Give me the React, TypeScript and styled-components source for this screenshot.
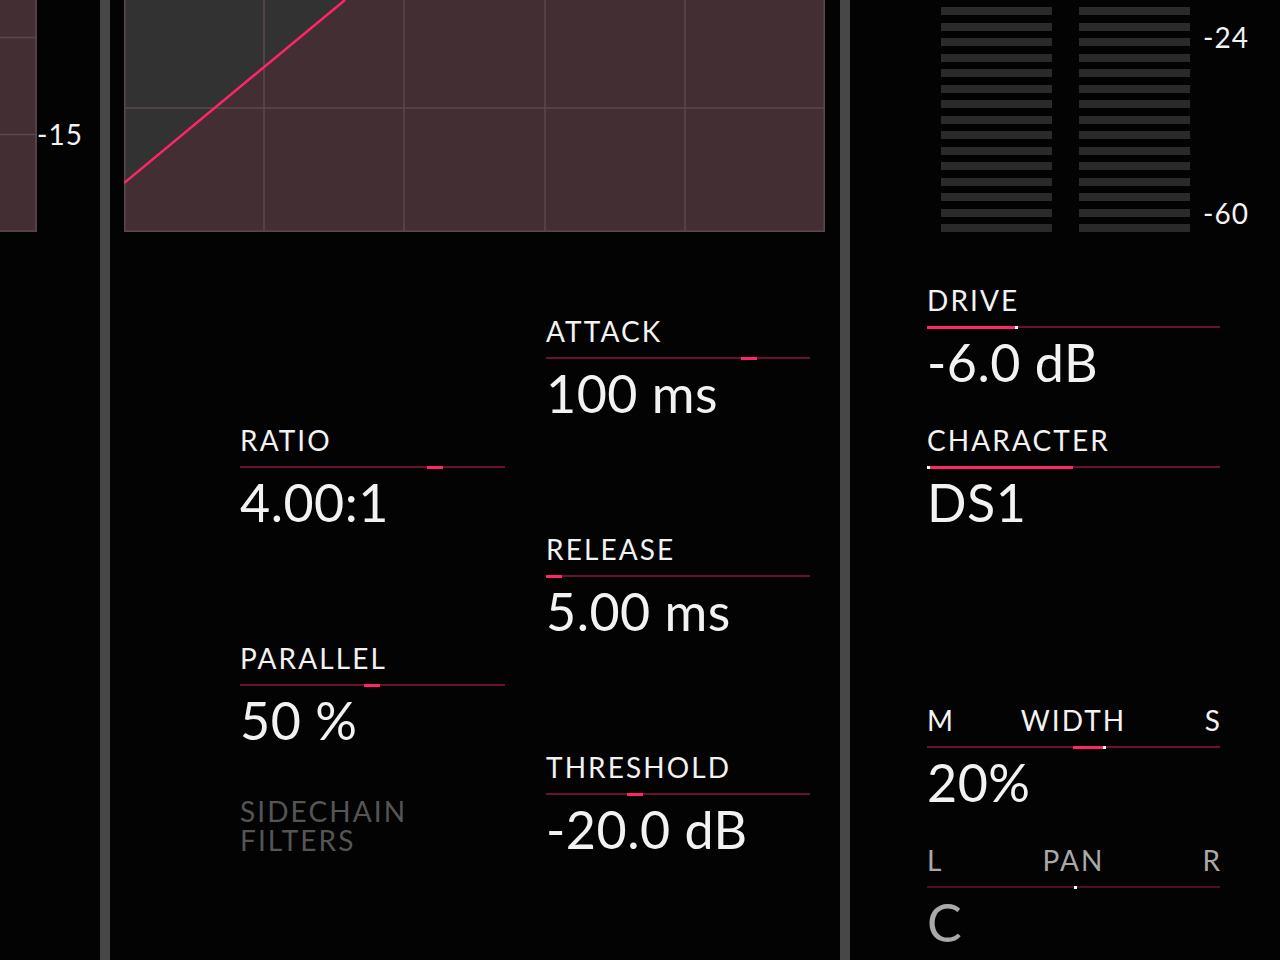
import React from "react";
import styled, { createGlobalStyle } from "styled-components";

const COLORS = {
  BG: "#030303",
  PANEL: "#432f33",
  GRID: "#5b484c",
  SHADE: "#323232",
  PINK: "#ff2566",
  TRACK: "#6a1131",
  TRACK_DIM: "#4c1026",
  TEXT: "#f2f2f2",
  TEXT_DIM: "#a9a9a9",
  TEXT_OFF: "#555555",
  DIVIDER: "#474747",
  METER: "#2a2a2a",
};

const GlobalStyle = createGlobalStyle`
  html, body {
    margin: 0;
    padding: 0;
    background: ${COLORS.BG};
  }
  body {
    font-family: Lato, "Open Sans", sans-serif;
    color: ${COLORS.TEXT};
  }
`;

type SliderProps = {
  thumb?: number;
  fillFrom?: number;
  fillTo?: number;
  dot?: number;
  $dim?: boolean;
};

const Slider = ({ thumb, fillFrom, fillTo, dot, $dim }: SliderProps) => (
  <Track $dim={$dim}>
    {thumb !== undefined && <Thumb style={{ left: `${thumb * 100}%` }} />}
    {fillFrom !== undefined && fillTo !== undefined && (
      <Fill
        style={{
          left: `${fillFrom * 100}%`,
          width: `${(fillTo - fillFrom) * 100}%`,
        }}
      />
    )}
    {dot !== undefined && <Dot style={{ left: `${dot * 100}%` }} />}
  </Track>
);

const METER_BARS = Array.from({ length: 15 });

const App = () => {
  return (
    <>
      <GlobalStyle />
      <Root>
        <LeftStrip>
          <LeftMeter>
            <svg width="37" height="232" viewBox="0 0 37 232">
              <rect x="0" y="0" width="37" height="232" fill={COLORS.PANEL} />
              <line x1="0" y1="37.5" x2="37" y2="37.5" stroke={COLORS.GRID} strokeWidth="1.5" />
              <line x1="0" y1="134.5" x2="37" y2="134.5" stroke={COLORS.GRID} strokeWidth="1.5" />
              <line x1="36" y1="0" x2="36" y2="232" stroke={COLORS.GRID} strokeWidth="1.5" />
              <line x1="0" y1="231" x2="37" y2="231" stroke={COLORS.GRID} strokeWidth="1.5" />
            </svg>
          </LeftMeter>
          <ScaleText $top={118}>-15</ScaleText>
        </LeftStrip>

        <Divider />

        <Center>
          <Graph>
            <svg width="701" height="232" viewBox="0 0 701 232">
              <rect x="0" y="0" width="701" height="232" fill={COLORS.PANEL} />
              <polygon points="0,0 221,0 0,183" fill={COLORS.SHADE} />
              {[140, 280, 421, 561].map((x) => (
                <line key={x} x1={x} y1="0" x2={x} y2="232" stroke={COLORS.GRID} strokeWidth="1.5" />
              ))}
              <line x1="0" y1="108" x2="701" y2="108" stroke={COLORS.GRID} strokeWidth="1.5" />
              <line x1="0.75" y1="0" x2="0.75" y2="232" stroke={COLORS.GRID} strokeWidth="1.5" />
              <line x1="700.25" y1="0" x2="700.25" y2="232" stroke={COLORS.GRID} strokeWidth="1.5" />
              <line x1="0" y1="231.25" x2="701" y2="231.25" stroke={COLORS.GRID} strokeWidth="1.5" />
              <line x1="0" y1="183" x2="221" y2="0" stroke={COLORS.PINK} strokeWidth="2.5" />
            </svg>
          </Graph>

          <ControlsGrid>
            <Column $top={192}>
              <Control $h={218}>
                <Label>RATIO</Label>
                <Slider thumb={0.706} />
                <Value>4.00:1</Value>
              </Control>
              <Control $h={155}>
                <Label>PARALLEL</Label>
                <Slider thumb={0.468} />
                <Value>50 %</Value>
              </Control>
              <Sidechain>
                <div>SIDECHAIN</div>
                <div>FILTERS</div>
              </Sidechain>
            </Column>
            <Column $top={83}>
              <Control $h={218}>
                <Label>ATTACK</Label>
                <Slider thumb={0.739} />
                <Value>100 ms</Value>
              </Control>
              <Control $h={218}>
                <Label>RELEASE</Label>
                <Slider thumb={0} />
                <Value>5.00 ms</Value>
              </Control>
              <Control>
                <Label>THRESHOLD</Label>
                <Slider thumb={0.307} />
                <Value>-20.0 dB</Value>
              </Control>
            </Column>
          </ControlsGrid>
        </Center>

        <Divider />

        <Right>
          <Meters>
            <MeterColumn>
              {METER_BARS.map((_, i) => (
                <MeterBar key={i} />
              ))}
            </MeterColumn>
            <MeterColumn>
              {METER_BARS.map((_, i) => (
                <MeterBar key={i} />
              ))}
            </MeterColumn>
            <MeterScale>
              <ScaleText>-24</ScaleText>
              <ScaleText>-60</ScaleText>
            </MeterScale>
          </Meters>

          <RightControls>
            <Control $h={140}>
              <Label>DRIVE</Label>
              <Slider fillFrom={0} fillTo={0.3} dot={0.3} />
              <Value>-6.0 dB</Value>
            </Control>
            <Control $h={280}>
              <Label>CHARACTER</Label>
              <Slider fillFrom={0} fillTo={0.498} dot={0} />
              <Value>DS1</Value>
            </Control>
            <Control $h={140}>
              <SplitLabel>
                <span>M</span>
                <span>WIDTH</span>
                <span>S</span>
              </SplitLabel>
              <Slider fillFrom={0.498} fillTo={0.6} dot={0.6} />
              <Value>20%</Value>
            </Control>
            <Control>
              <SplitLabel $dim>
                <span>L</span>
                <span>PAN</span>
                <span>R</span>
              </SplitLabel>
              <Slider dot={0.5} $dim />
              <Value $dim>C</Value>
            </Control>
          </RightControls>
        </Right>
      </Root>
    </>
  );
};

const Root = styled.div`
  display: flex;
  width: 1280px;
  height: 960px;
  overflow: hidden;
  background: ${COLORS.BG};
`;

const LeftStrip = styled.div`
  display: flex;
  align-items: flex-start;
  width: 100px;
  flex-shrink: 0;
`;

const LeftMeter = styled.div`
  width: 37px;
  height: 232px;
  svg {
    display: block;
  }
`;

const ScaleText = styled.div<{ $top?: number }>`
  margin-top: ${(p) => p.$top ?? 0}px;
  font-size: 28px;
  line-height: 32px;
  letter-spacing: 1px;
  color: ${COLORS.TEXT};
`;

const Divider = styled.div`
  width: 10px;
  height: 960px;
  flex-shrink: 0;
  background: ${COLORS.DIVIDER};
`;

const Center = styled.div`
  display: flex;
  flex-direction: column;
  width: 730px;
  flex-shrink: 0;
  padding: 0 15px 0 14px;
  box-sizing: border-box;
`;

const Graph = styled.div`
  width: 701px;
  height: 232px;
  svg {
    display: block;
  }
`;

const ControlsGrid = styled.div`
  display: grid;
  grid-template-columns: 265px 264px;
  column-gap: 41px;
  padding-left: 116px;
`;

const Column = styled.div<{ $top: number }>`
  display: flex;
  flex-direction: column;
  padding-top: ${(p) => p.$top}px;
`;

const Control = styled.div<{ $h?: number }>`
  display: flex;
  flex-direction: column;
  height: ${(p) => (p.$h ? `${p.$h}px` : "auto")};
  flex-shrink: 0;
`;

const Label = styled.div`
  font-size: 28px;
  line-height: 32px;
  letter-spacing: 2.1px;
  white-space: nowrap;
  color: ${COLORS.TEXT};
`;

const SplitLabel = styled.div<{ $dim?: boolean }>`
  display: grid;
  grid-template-columns: 1fr auto 1fr;
  font-size: 28px;
  line-height: 32px;
  letter-spacing: 2.1px;
  color: ${(p) => (p.$dim ? COLORS.TEXT_DIM : COLORS.TEXT)};
  span:last-child {
    text-align: right;
    letter-spacing: 0;
  }
`;

const Track = styled.div<{ $dim?: boolean }>`
  position: relative;
  height: 2px;
  margin-top: 10px;
  background: ${(p) => (p.$dim ? COLORS.TRACK_DIM : COLORS.TRACK)};
`;

const Thumb = styled.div`
  position: absolute;
  top: -0.5px;
  width: 16px;
  height: 3px;
  background: ${COLORS.PINK};
`;

const Fill = styled.div`
  position: absolute;
  top: -0.5px;
  height: 3px;
  background: ${COLORS.PINK};
`;

const Dot = styled.div`
  position: absolute;
  top: -0.5px;
  width: 3px;
  height: 3px;
  background: #ffffff;
`;

const Value = styled.div<{ $dim?: boolean }>`
  margin-top: 4px;
  font-size: 52px;
  line-height: 60px;
  font-weight: 400;
  letter-spacing: 0.5px;
  white-space: nowrap;
  color: ${(p) => (p.$dim ? COLORS.TEXT_DIM : COLORS.TEXT)};
`;

const Sidechain = styled.div`
  display: flex;
  flex-direction: column;
  font-size: 28px;
  line-height: 29px;
  letter-spacing: 2.1px;
  color: ${COLORS.TEXT_OFF};
`;

const Right = styled.div`
  display: flex;
  flex-direction: column;
  flex: 1;
`;

const Meters = styled.div`
  display: flex;
  height: 232px;
  padding: 7px 0 0 91px;
  box-sizing: border-box;
  gap: 27px;
`;

const MeterColumn = styled.div`
  display: flex;
  flex-direction: column;
  gap: 7.5px;
  width: 111px;
`;

const MeterBar = styled.div`
  height: 8px;
  background: ${COLORS.METER};
`;

const MeterScale = styled.div`
  display: flex;
  flex-direction: column;
  gap: 144px;
  margin-left: -14px;
  padding-top: 14px;
`;

const RightControls = styled.div`
  display: flex;
  flex-direction: column;
  width: 293px;
  padding: 52px 0 0 77px;
`;

export default App;
